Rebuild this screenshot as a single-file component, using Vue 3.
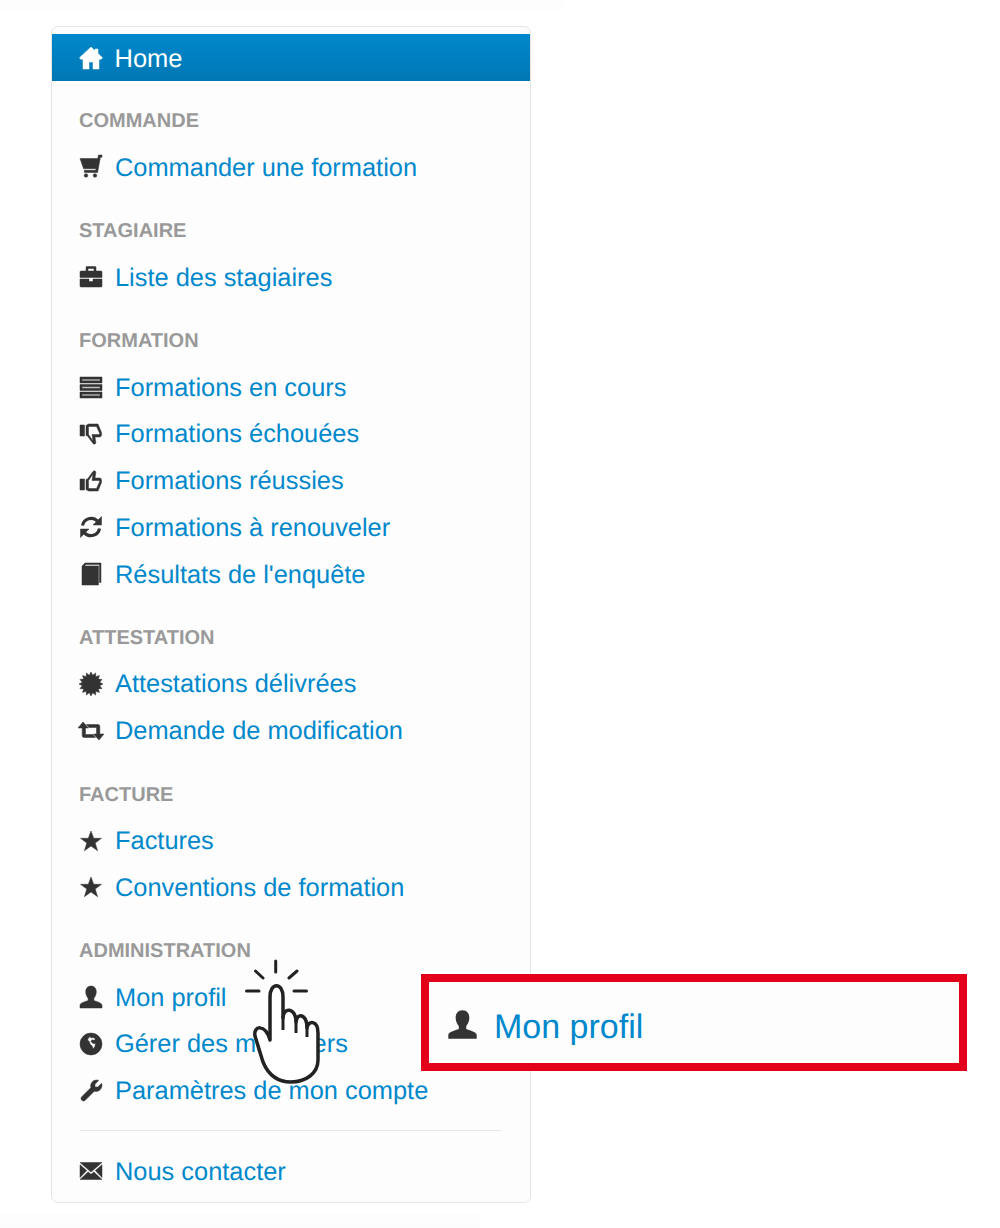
<script setup>
function burst(points, outer, inner) {
  const pts = []
  for (let i = 0; i < points * 2; i++) {
    const r = i % 2 ? inner : outer
    const a = (Math.PI * i) / points
    pts.push((12 + r * Math.sin(a)).toFixed(2) + ' ' + (12 - r * Math.cos(a)).toFixed(2))
  }
  return 'M' + pts.join('L') + 'Z'
}

const icons = {
  home: [{ d: 'M12 1 .5 11.800 1.800 13.300H4V23h6v-7h4v7h6V13.300h2.200l1.300-1.500-4.500-4.200V3h-3v1.800z' }],
  cart: [{ d: 'M19.500 0H23v2.200h-1.600L18.600 17.500H5.500l-.4-2.200h11.600l.3-1.600H4.600L1 3.500h17.800zM7 18.700a1.800 1.800 0 1 1 0 3.600 1.800 1.800 0 0 1 0-3.600zm9 0a1.800 1.800 0 1 1 0 3.600 1.800 1.800 0 0 1 0-3.600z' }],
  briefcase: [{ d: 'M8 1.500h8a1 1 0 0 1 1 1V6h5a1 1 0 0 1 1 1v5.500H1V7a1 1 0 0 1 1-1h5V2.500a1 1 0 0 1 1-1zm1 2V6h6V3.500zM1 14h9v2.500h4V14h9v7a1 1 0 0 1-1 1H2a1 1 0 0 1-1-1z' }],
  tasks: [{ d: 'M1 2h22v6H1zM3 4.300v1.400h18V4.300zM1 9.500h22v6H1zM3 11.800v1.400h18v-1.400zM1 17h22v6H1zM3 19.300v1.400h18v-1.400z' }],
  down: [{ d: 'M1 3h4.500v11H1zM7 3.500 9.500 2H19l3.500 8.500V13a2 2 0 0 1-2 2H16l.8 5.500c.1 1.600-1.800 2.200-2.800 1L8.500 14 7 13.500zM9.500 5v7.500l4.500 6.500-1-6.500h7.500v-1.500L17.500 4.500H10z' }],
  up: [{ d: 'M1 10h4.500v11H1zM7 20.500 9.500 22H19l3.500-8.500V11a2 2 0 0 0-2-2H16l.8-5.500c.1-1.600-1.800-2.200-2.800-1L8.500 10 7 10.500zM9.500 19v-7.500L14 5l-1 6.500h7.500V13L17.500 19.500H10z' }],
  refresh: [
    { d: 'M3.500 10.500a8.700 8.700 0 0 1 15-4.300', stroke: true },
    { d: 'M22.500 1.500v8.500H14z' },
    { d: 'M20.500 13.500a8.700 8.700 0 0 1-15 4.300', stroke: true },
    { d: 'M1.500 22.500V14H10z' }
  ],
  book: [{ d: 'M3 4 6 1h16v19.500h-1.600V2.600H7L5.500 4H19.500v19H3z' }],
  badge: [{ d: burst(16, 12, 8.8) }],
  retweet: [{ d: 'M4 3 9.500 9H6.500v6.500H14l2.500 3H5A1.800 1.800 0 0 1 3.200 16.700V9H-1zM20 21l-5.500-6h3V8.500H10L7.500 5.500H19A1.800 1.800 0 0 1 20.800 7.300V15H25z' }],
  star: [{ d: 'M12 2l2.700 7.300h7.800l-6.300 4.700 2.400 7.700L12 17l-6.600 4.700 2.400-7.700-6.300-4.700h7.800z' }],
  user: [{ d: 'M12 1c3.500 0 5.300 2.500 5.300 5.800 0 2.700-1.200 5-2.400 6.400v2.300c2.500 1 7.100 2 8.100 4.300V23H1v-3.200c1-2.300 5.600-3.300 8.100-4.300v-2.300C7.900 11.800 6.700 9.500 6.700 6.800 6.700 3.500 8.500 1 12 1z' }],
  globe: [{ d: 'M12 1a11 11 0 1 1 0 22 11 11 0 0 1 0-22zM11 4.500l1 1.500 2-.5 2 1 .2 1.300-1.700.5-1.500-.5-1 1.500 1.500 2 3 .5-.7 3-1.800 2-1-3-2-1.500-.5-2.500-2-1.800 1-2z' }],
  wrench: [{ d: 'M17.500 1a6 6 0 0 1 2.200.4L16 5.200v2.800h2.800l3.800-3.700c.3.700.4 1.400.4 2.200a6 6 0 0 1-7.700 5.700L6 21.500a2.500 2.500 0 0 1-3.500-3.500l9.300-9.300A6 6 0 0 1 17.500 1z' }],
  mail: [{ d: 'M1 3.500h22L12 13zM1 5.800 7.700 11.600 1 18.500zM23 5.800v12.700l-6.700-6.900zM1 20.500l8.200-7.600L12 15.300l2.800-2.400 8.200 7.600z' }]
}

const groups = [
  { title: 'COMMANDE', items: [{ icon: 'cart', label: 'Commander une formation' }] },
  { title: 'STAGIAIRE', items: [{ icon: 'briefcase', label: 'Liste des stagiaires' }] },
  {
    title: 'FORMATION',
    items: [
      { icon: 'tasks', label: 'Formations en cours' },
      { icon: 'down', label: 'Formations échouées' },
      { icon: 'up', label: 'Formations réussies' },
      { icon: 'refresh', label: 'Formations à renouveler' },
      { icon: 'book', label: "Résultats de l'enquête" }
    ]
  },
  {
    title: 'ATTESTATION',
    items: [
      { icon: 'badge', label: 'Attestations délivrées' },
      { icon: 'retweet', label: 'Demande de modification' }
    ]
  },
  {
    title: 'FACTURE',
    items: [
      { icon: 'star', label: 'Factures' },
      { icon: 'star', label: 'Conventions de formation' }
    ]
  },
  {
    title: 'ADMINISTRATION',
    items: [
      { icon: 'user', label: 'Mon profil' },
      { icon: 'globe', label: 'Gérer des managers' },
      { icon: 'wrench', label: 'Paramètres de mon compte' }
    ]
  }
]
</script>

<template>
  <div class="page">
    <nav class="panel">
      <a class="home">
        <svg class="icon" viewBox="0 0 24 24"><path v-for="p in icons.home" :key="p.d" :d="p.d" fill-rule="evenodd" /></svg>
        <span>Home</span>
      </a>
      <section v-for="g in groups" :key="g.title" class="group">
        <h3 class="title">{{ g.title }}</h3>
        <a v-for="it in g.items" :key="it.label" class="item">
          <svg class="icon" viewBox="0 0 24 24">
            <path v-for="p in icons[it.icon]" :key="p.d" :d="p.d" fill-rule="evenodd" :class="{ stroked: p.stroke }" />
          </svg>
          <span>{{ it.label }}</span>
        </a>
      </section>
      <hr class="divider" />
      <a class="item">
        <svg class="icon" viewBox="0 0 24 24"><path v-for="p in icons.mail" :key="p.d" :d="p.d" fill-rule="evenodd" /></svg>
        <span>Nous contacter</span>
      </a>
    </nav>

    <div class="callout">
      <svg class="callout-icon" viewBox="0 0 24 24"><path v-for="p in icons.user" :key="p.d" :d="p.d" fill-rule="evenodd" /></svg>
      <span>Mon profil</span>
    </div>

    <svg class="hand" viewBox="240 955 85 132" width="85" height="132">
      <g class="rays">
        <path d="M275.700 961V972M255.500 971 263 978M297 971 289 978M246.500 991H259M294 991H306.500" />
      </g>
      <path class="palm" d="M270 1040V997C270 982 283 982 283 997V1018C283 1007 296 1007 296 1022C297 1012 307 1014 307 1028C308 1020 318 1020 318 1033V1060C318 1074 305 1082 291 1082C276 1082 268 1074 263 1062L255 1036C253 1026 265 1023 270 1040Z" />
      <path class="palm-line" d="M283 1016V1030M296 1020V1033M307 1026V1037" />
    </svg>
  </div>
</template>

<style scoped>
.page {
  position: relative;
  width: 1000px;
  height: 1228px;
  padding: 26px 0 0 51px;
  box-sizing: border-box;
  background:
    linear-gradient(#fdfdfd, #fdfdfd) 0 0 / 563px 10px no-repeat,
    linear-gradient(#fefefe, #fbfbfb) 0 1212px / 480px 16px no-repeat,
    #fff;
  font-family: "Liberation Sans", Arial, sans-serif;
  text-rendering: geometricPrecision;
}
.panel {
  width: 480px;
  height: 1177px;
  box-sizing: border-box;
  padding-top: 7px;
  background: #fdfdfd;
  border: 1px solid #e5e5e5;
  border-radius: 7px;
}
.home {
  display: flex;
  align-items: center;
  height: 47px;
  padding-left: 26.500px;
  font-size: 25.500px;
  color: #fff;
  background: linear-gradient(#0088cc, #0077b3);
}
.home span { padding-top: 3px; }
.home .icon { fill: #fff; stroke: #fff; }
.group { margin-top: 16.600px; }
.group:first-of-type { margin-top: 16.300px; }
.title {
  margin: 0;
  height: 46.700px;
  line-height: 49px;
  padding-left: 27px;
  font-size: 20px;
  font-weight: 700;
  color: #999;
}
.item {
  display: flex;
  align-items: center;
  height: 46.700px;
  padding-left: 27px;
  font-size: 25.400px;
  color: #0088cc;
}
.item span { padding-top: 2px; }
.icon {
  flex: none;
  width: 24px;
  height: 24px;
  margin-right: 12px;
  fill: #333;
  stroke: #333;
  stroke-width: 0.500;
  overflow: visible;
  filter: blur(0.3px);
}
.stroked {
  fill: none;
  stroke: #333;
  stroke-width: 3.200;
}
.divider {
  height: 1px;
  margin: 16px 29px 17px 28px;
  border: 0;
  background: #e5e5e5;
}
.callout {
  position: absolute;
  left: 421px;
  top: 974px;
  width: 546px;
  height: 97px;
  box-sizing: border-box;
  display: flex;
  align-items: center;
  padding: 9px 0 0 18px;
  border: 8px solid #e2001a;
  background: #fdfdfd;
  font-size: 34px;
  color: #0088cc;
}
.callout-icon {
  width: 31px;
  height: 31px;
  margin: -6px 16px 0 0;
  fill: #333;
}
.hand {
  position: absolute;
  left: 240px;
  top: 955px;
}
.rays path {
  fill: none;
  stroke: #222;
  stroke-width: 3;
  stroke-linecap: round;
}
.palm {
  fill: #fff;
  stroke: #222;
  stroke-width: 3.500;
  stroke-linejoin: round;
}
.palm-line {
  fill: none;
  stroke: #222;
  stroke-width: 3;
}
</style>
